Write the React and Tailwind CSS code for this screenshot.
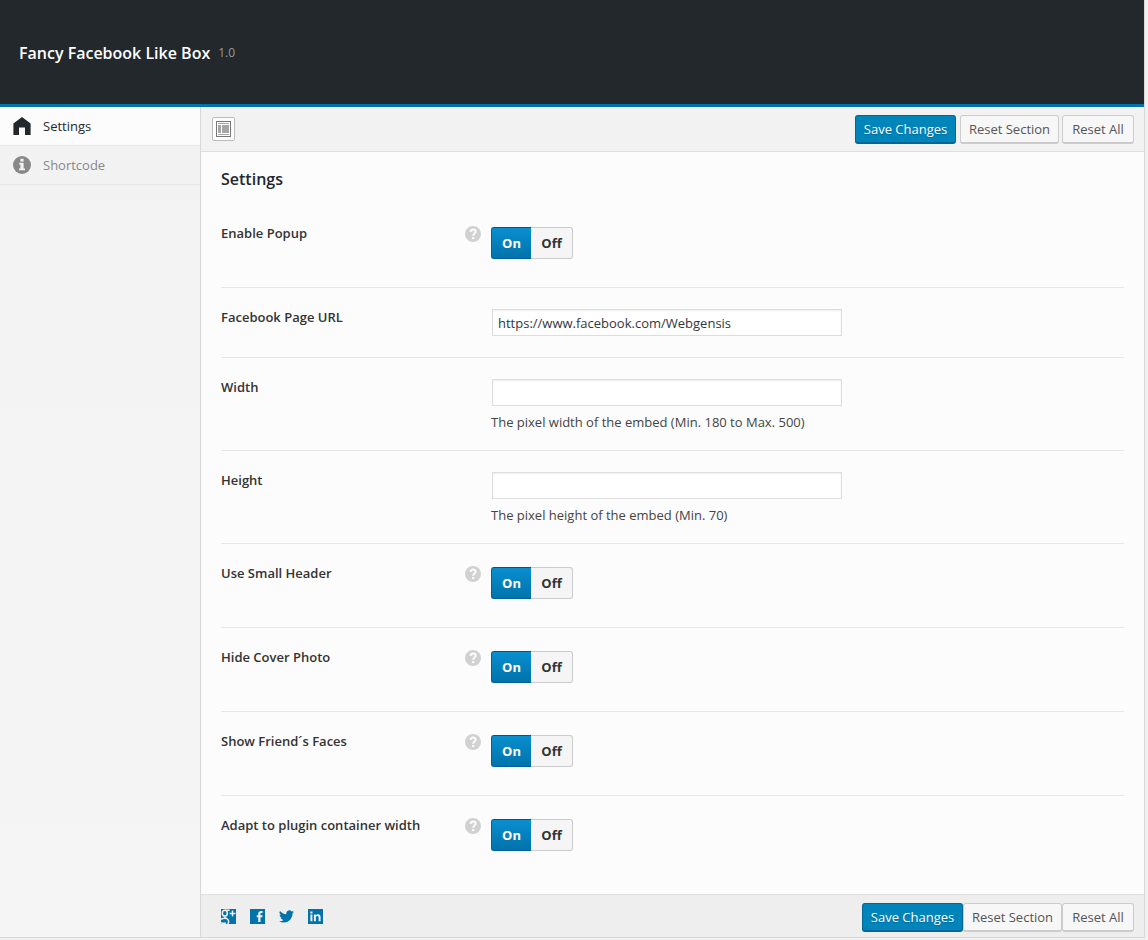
import { useState } from "react";

const ROWS = [
  { id: "popup", label: "Enable Popup", type: "switch" },
  { id: "url", label: "Facebook Page URL", type: "text", value: "https://www.facebook.com/Webgensis" },
  { id: "width", label: "Width", type: "text", value: "", note: "The pixel width of the embed (Min. 180 to Max. 500)" },
  { id: "height", label: "Height", type: "text", value: "", note: "The pixel height of the embed (Min. 70)" },
  { id: "small-header", label: "Use Small Header", type: "switch" },
  { id: "hide-cover", label: "Hide Cover Photo", type: "switch" },
  { id: "faces", label: "Show Friend´s Faces", type: "switch" },
  { id: "adapt", label: "Adapt to plugin container width", type: "switch" },
];

function HomeIcon() {
  return (
    <svg viewBox="0 0 18 18" className="h-[18px] w-[18px]" fill="currentColor" aria-hidden="true">
      <path d="M9 0 17.6 6.6V18H12V10.5H6V18H.4V6.6Z" />
    </svg>
  );
}

function InfoIcon() {
  return (
    <svg viewBox="0 0 18 18" className="h-[18px] w-[18px]" aria-hidden="true">
      <circle cx="9" cy="9" r="9" fill="currentColor" />
      <path d="M7.4 2.8h3.2v2.6H7.4ZM6.2 6.8h4.4v5.8h1.4v1.6H6v-1.6h1.4V8.4H6.2Z" fill="#f2f2f2" />
    </svg>
  );
}

function HelpIcon() {
  return (
    <svg viewBox="0 0 16 16" className="h-4 w-4" aria-hidden="true">
      <circle cx="8" cy="8" r="8" fill="#d1d1d1" />
      <path d="M5.6 6.1C5.6 4.4 6.6 3.5 8.1 3.5S10.6 4.4 10.6 5.8C10.6 7.5 8.2 7.6 8.2 9.7" fill="none" stroke="#fcfcfc" strokeWidth="2" />
      <path d="M7.1 11h2.2v2.1H7.1Z" fill="#fcfcfc" />
    </svg>
  );
}

function LayoutIcon() {
  return (
    <svg viewBox="0 0 15 16" className="h-4 w-[15px]" aria-hidden="true">
      <rect x=".5" y=".5" width="14" height="15" fill="#fff" stroke="#777" />
      <path d="M2 2h11v1H2ZM2 4h3v8H2ZM6 4h7v8H6ZM2 13h11v1H2Z" fill="#a6a6a6" />
    </svg>
  );
}

function GooglePlusIcon() {
  return (
    <svg viewBox="0 0 15 15" className="h-[15px] w-[15px]" aria-hidden="true">
      <path d="M0 0h15v15H0Z" fill="#0073aa" />
      <g fill="none" stroke="#eee" strokeWidth="1.5">
        <ellipse cx="3.8" cy="4.2" rx="2.5" ry="2.9" />
        <path d="M4 1.3H8.6M3.8 7.4C3.4 8.6 4.6 9 6 9.8 8 11 8 13 6.8 15M4.8 9.4C3 9.2 1.2 9.6 0 10.4M0 13.6C1.6 14.4 3.2 14.4 5 14M11.5 1.5v6M8.6 4.5h5.8" />
      </g>
    </svg>
  );
}

function FacebookIcon() {
  return (
    <svg viewBox="0 0 15 15" className="h-[15px] w-[15px]" aria-hidden="true">
      <path d="M0 0h15v15H0Z" fill="#0073aa" />
      <path d="M8.2 13V8.3H6.7V6.2h1.5V4.9C8.200 2.900 9.400 2 11.200 2h1.400V4.100h-1.100c-.8 0-1 .4-1 1v1.100h2.100l-.3 2.100h-1.800V13Z" fill="#eee" />
    </svg>
  );
}

function TwitterIcon() {
  return (
    <svg viewBox="0 0 24 24" className="h-[15px] w-[15px]" aria-hidden="true">
      <path
        fill="#0073aa"
        d="M23.95 4.57a10 10 0 0 1-2.82.77 4.96 4.96 0 0 0 2.16-2.72c-.95.55-2 .96-3.12 1.18a4.92 4.92 0 0 0-8.38 4.48C7.69 8.1 4.07 6.13 1.64 3.16a4.92 4.92 0 0 0 1.52 6.57 4.9 4.9 0 0 1-2.23-.61v.06c0 2.38 1.7 4.37 3.95 4.82a5 5 0 0 1-2.21.09 4.94 4.94 0 0 0 4.6 3.42A9.87 9.87 0 0 1 0 19.54a13.99 13.99 0 0 0 7.56 2.21c9.05 0 14-7.5 14-13.98 0-.21 0-.42-.02-.63a9.94 9.94 0 0 0 2.46-2.55Z"
      />
    </svg>
  );
}

function LinkedinIcon() {
  return (
    <svg viewBox="0 0 15 15" className="h-[15px] w-[15px]" aria-hidden="true">
      <path d="M0 0h15v15H0Z" fill="#0073aa" />
      <path d="M2.4 5.4h2v6.8h-2ZM2.3 2.5h2.2v1.9H2.3ZM5.9 5.4h2v.9c.4-.7 1.1-1.1 2.1-1.1 1.9 0 2.6 1.2 2.6 3.1v3.9h-2V8.7c0-1-.3-1.7-1.200-1.700S7.900 7.700 7.900 8.700v3.500h-2Z" fill="#eee" />
    </svg>
  );
}

const SOCIAL = [
  { name: "Google+", Icon: GooglePlusIcon },
  { name: "Facebook", Icon: FacebookIcon },
  { name: "Twitter", Icon: TwitterIcon },
  { name: "LinkedIn", Icon: LinkedinIcon },
];

function PrimaryButton({ children }) {
  return (
    <button type="button" className="h-[29px] w-[101px] whitespace-nowrap rounded-[3px] border border-b-2 border-[#006799] bg-[#0085ba] pt-0.5 text-white [text-shadow:0_1px_1px_#006799]">
      {children}
    </button>
  );
}

function SecondaryButton({ wide, children }) {
  return (
    <button
      type="button"
      className={`${wide ? "w-[99px]" : "w-[72px]"} h-[29px] whitespace-nowrap rounded-[3px] border border-b-2 border-[#ccc] bg-[#f7f7f7] pt-0.5 text-[#555]`}
    >
      {children}
    </button>
  );
}

function Switch({ labelId }) {
  const [on, setOn] = useState(true);
  const active = "border-[#00609a] border-t-[#005684] bg-linear-to-b from-[#0a8fd0] to-[#0073aa] text-white";
  const idle = "border-[#ccc] bg-[#f5f5f5] text-[#333]";
  return (
    <div role="group" aria-labelledby={labelId} className="mt-[23px] flex h-8 font-bold">
      <button type="button" aria-pressed={on} onClick={() => setOn(true)} className={`w-10 rounded-l-[3px] border border-r-0 pt-0.5 ${on ? active : idle}`}>
        On
      </button>
      <button type="button" aria-pressed={!on} onClick={() => setOn(false)} className={`w-[42px] rounded-r-[3px] border border-l-0 pt-0.5 ${on ? idle : active}`}>
        Off
      </button>
    </div>
  );
}

function Row({ row }) {
  const isSwitch = row.type === "switch";
  const labelId = `${row.id}-label`;
  const bottom = isSwitch ? "pb-7 last:pb-[43px]" : row.note ? "pb-[19px]" : "pb-[21px]";
  return (
    <div className={`flex border-b border-[#e7e7e7] last:border-b-0 ${bottom}`}>
      <div className="flex w-[270px] shrink-0 items-start justify-between pr-[10px] pt-[19px]">
        {isSwitch ? (
          <span id={labelId} className="font-semibold leading-5 text-[#333]">{row.label}</span>
        ) : (
          <label id={labelId} htmlFor={row.id} className="font-semibold leading-5 text-[#333]">{row.label}</label>
        )}
        {isSwitch && (
          <button type="button" aria-label={`Help: ${row.label}`} className="mt-[3px]">
            <HelpIcon />
          </button>
        )}
      </div>
      {isSwitch ? (
        <Switch labelId={labelId} />
      ) : (
        <div className="min-w-0 pt-[21px]">
          <input
            id={row.id}
            type="text"
            defaultValue={row.value}
            className="ml-px block h-[27px] w-[350px] border border-[#ddd] bg-white px-[5px] text-[#32373c] shadow-[inset_0_1px_2px_rgba(0,0,0,0.07)] outline-none"
          />
          {row.note && <p className="mt-[7px] leading-[18px] text-[#444]">{row.note}</p>}
        </div>
      )}
    </div>
  );
}

export default function App() {
  return (
    <div className="min-h-screen bg-[#f1f1f1] pr-[3px] font-['Open_Sans','Noto_Sans',sans-serif] text-[13px]">
      <div className="border-r border-[#d8d8d8]">
        <header className="flex h-[107px] items-center gap-2 border-b-[3px] border-[#0073aa] bg-[#23282d] pl-[19px] pt-0.5">
          <h1 className="text-base font-semibold text-white">Fancy Facebook Like Box</h1>
          <span className="text-xs text-[#999]">1.0</span>
        </header>

        <div className="flex border-b border-[#d8d8d8] bg-[#fcfcfc]">
          <nav className="w-[201px] shrink-0 border-r border-[#d8d8d8] bg-linear-to-b from-[#f2f2f2] to-[#f5f5f5] font-medium">
            <a href="#settings" aria-current="page" className="flex h-[39px] items-center gap-3 border-b border-[#e7e7e7] bg-[#fcfcfc] pl-[13px] text-[#23282d]">
              <HomeIcon />
              <span className="pt-0.5">Settings</span>
            </a>
            <a href="#shortcode" className="flex h-[39px] items-center gap-3 border-b border-[#e7e7e7] pl-[13px] text-[#888]">
              <InfoIcon />
              <span className="pt-0.5">Shortcode</span>
            </a>
          </nav>

          <main className="min-w-0 flex-1">
            <div className="flex h-[45px] items-center justify-between border-b border-[#dedede] bg-[#f2f2f2] pl-[11px] pr-[10px]">
              <button type="button" aria-label="Expand options" className="flex h-6 w-[23px] items-center justify-center rounded-[2px] border border-[#bbb] bg-[#fcfcfc]">
                <LayoutIcon />
              </button>
              <div className="flex">
                <PrimaryButton>Save Changes</PrimaryButton>
                <div className="ml-1 flex gap-[3px]">
                  <SecondaryButton wide>Reset Section</SecondaryButton>
                  <SecondaryButton>Reset All</SecondaryButton>
                </div>
              </div>
            </div>

            <section className="px-5 pt-[15px]">
              <h2 className="mb-[13px] text-base font-semibold text-[#23282d]">Settings</h2>
              {ROWS.map((row) => (
                <Row key={row.id} row={row} />
              ))}
            </section>

            <footer className="flex h-[43px] items-center justify-between border-t border-[#e0e0e0] bg-[#eee] pl-5 pr-[10px]">
              <div className="flex gap-[14px]">
                {SOCIAL.map(({ name, Icon }) => (
                  <a key={name} href="#social" aria-label={name}>
                    <Icon />
                  </a>
                ))}
              </div>
              <div className="flex pt-0.5">
                <PrimaryButton>Save Changes</PrimaryButton>
                <SecondaryButton wide>Reset Section</SecondaryButton>
                <SecondaryButton>Reset All</SecondaryButton>
              </div>
            </footer>
          </main>
        </div>
      </div>
    </div>
  );
}
